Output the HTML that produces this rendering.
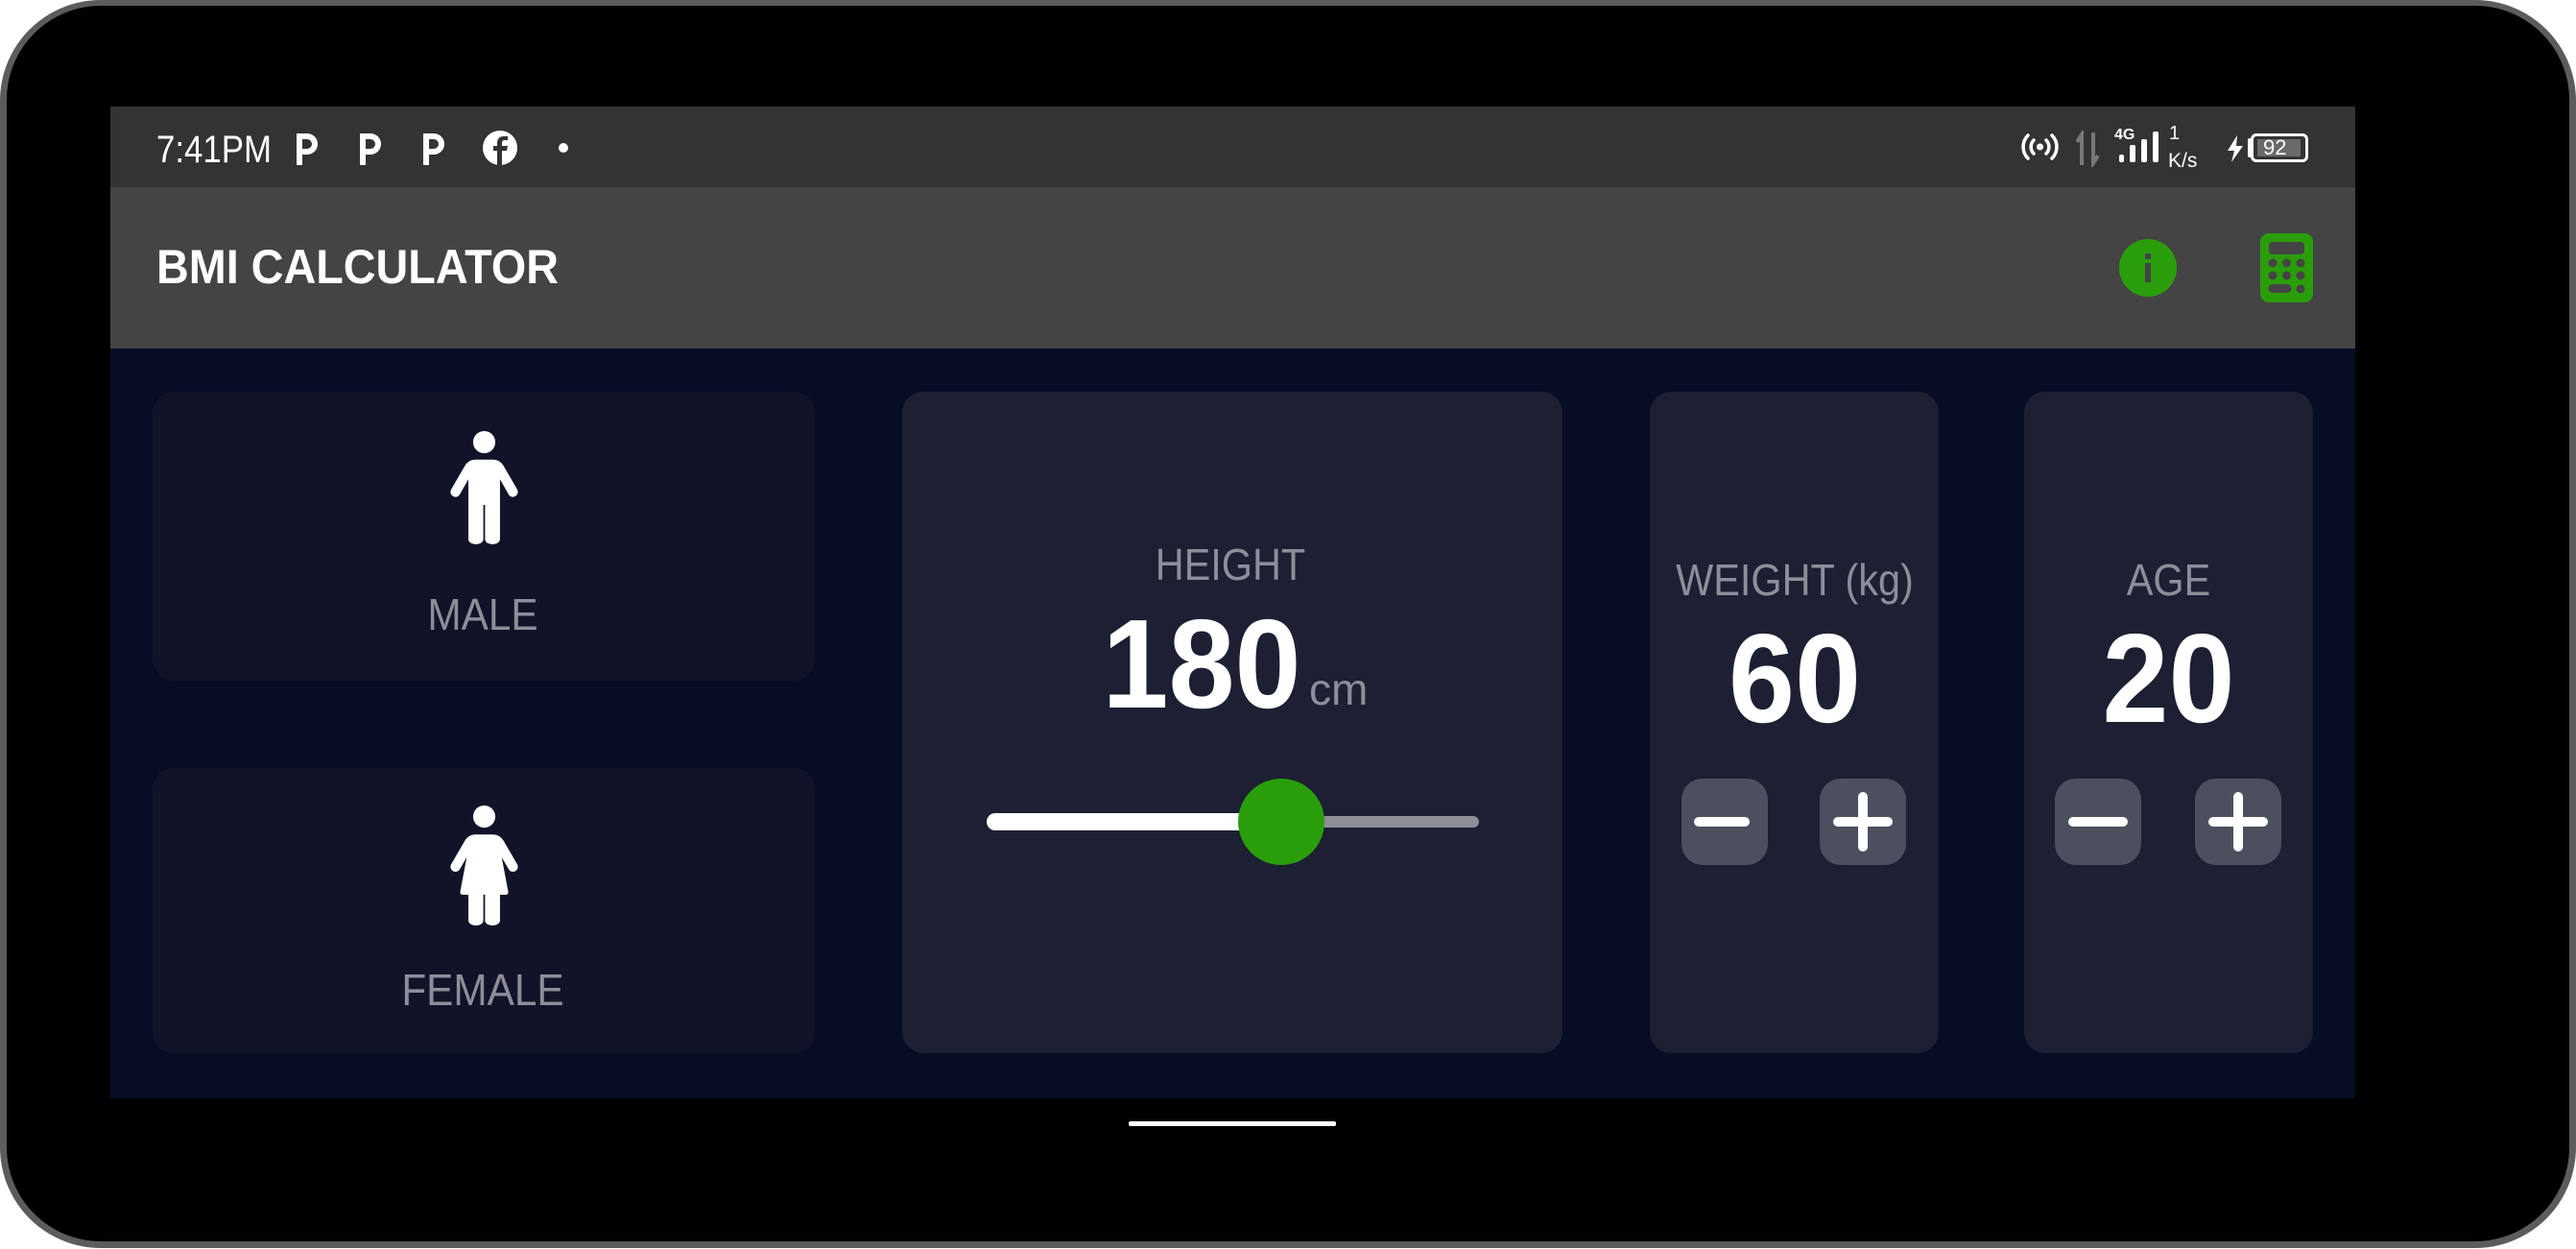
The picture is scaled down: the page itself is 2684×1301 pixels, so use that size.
<!DOCTYPE html>
<html><head><meta charset="utf-8"><style>
*{margin:0;padding:0;box-sizing:border-box}
html,body{width:2684px;height:1301px;background:#fff;overflow:hidden;font-family:"Liberation Sans",sans-serif}
.dev{position:absolute;left:0;top:0;width:2684px;height:1300px;border-radius:105px;background:#5c5c5c;}
.dev2{position:absolute;left:7px;top:6px;width:2670px;height:1287px;border-radius:98px;background:#000;}
.abs{position:absolute}
.scr{position:absolute;left:115px;top:111px;width:2339px;height:1033px;background:#080d26;overflow:hidden}
.sb{position:absolute;left:0;top:0;width:100%;height:84px;background:#333333}
.ab{position:absolute;left:0;top:84px;width:100%;height:168px;background:#444444}
.card{position:absolute;border-radius:22px}
.dk{background:#111428}
.lt{background:#1d1f33}
.lbl{position:absolute;color:#8d8e98;font-size:46px;white-space:nowrap;transform-origin:center;line-height:1}
.big{position:absolute;color:#fff;font-weight:bold;font-size:132px;line-height:1;white-space:nowrap;transform-origin:center}
.btn{position:absolute;width:90px;height:90px;border-radius:22px;background:#4c4f5e}
</style></head><body>
<div class="dev"></div><div class="dev2"></div>
<div class="scr">
 <div class="sb">
  <div class="abs" style="left:48px;top:25px;font-size:40px;color:#fff;line-height:1;transform:scaleX(.87);transform-origin:left">7:41PM</div>
  <svg class="abs" style="left:190px;top:24px" width="170" height="40" viewBox="0 0 170 40">
   <g fill="#fff" fill-rule="evenodd">
    <path d="M4 4h11a11 11 0 0 1 0 22h-5v11h-6z M10 10v10h5a5 5 0 0 0 0-10z"/>
    <path d="M70 4h11a11 11 0 0 1 0 22h-5v11h-6z M76 10v10h5a5 5 0 0 0 0-10z"/>
    <path d="M136 4h11a11 11 0 0 1 0 22h-5v11h-6z M142 10v10h5a5 5 0 0 0 0-10z"/>
   </g>
  </svg>
  <svg class="abs" style="left:387px;top:24px" width="40" height="38" viewBox="0 0 40 38">
   <circle cx="19" cy="19" r="18" fill="#fff"/>
   <path d="M21 37V22h5l1-5h-6v-3c0-2 1-3 3-3h3V7h-4c-5 0-7 3-7 7v3h-4v5h4v15z" fill="#333"/>
  </svg>
  <div class="abs" style="left:467px;top:38px;width:10px;height:10px;border-radius:5px;background:#fff"></div>
  <svg class="abs" style="left:1988px;top:24px" width="45" height="36" viewBox="0 0 45 36">
   <g fill="none" stroke="#fff" stroke-width="3.5" stroke-linecap="round">
    <path d="M10 6a17 17 0 0 0 0 24"/><path d="M35 6a17 17 0 0 1 0 24"/>
    <path d="M16 11a10 10 0 0 0 0 14"/><path d="M29 11a10 10 0 0 1 0 14"/>
   </g><circle cx="22.5" cy="18" r="3.5" fill="#fff"/>
  </svg>
  <svg class="abs" style="left:2048px;top:25px" width="30" height="38" viewBox="0 0 30 38">
   <path d="M6 36V4L1 12M18 2v32l5-8" fill="none" stroke="#777" stroke-width="4"/>
  </svg>
  <div class="abs" style="left:2088px;top:21px;font-size:16px;font-weight:bold;color:#fff">4G</div>
  <svg class="abs" style="left:2090px;top:24px" width="46" height="36" viewBox="0 0 46 36">
   <g fill="#fff"><rect x="3" y="26" width="5" height="8" rx="2"/><rect x="14" y="16" width="6" height="18" rx="2"/><rect x="26" y="10" width="6" height="24" rx="2"/><rect x="38" y="2" width="6" height="32" rx="2"/></g>
  </svg>
  <div class="abs" style="left:2145px;top:18px;font-size:20px;color:#fff;line-height:1">1</div>
  <div class="abs" style="left:2144px;top:46px;font-size:21px;color:#fff;line-height:1">K/s</div>
  <svg class="abs" style="left:2204px;top:30px" width="20" height="28" viewBox="0 0 20 28"><path d="M12 0L2 16h7l-3 12 12-17h-7z" fill="#fff"/></svg>
  <div class="abs" style="left:2227px;top:33px;width:5px;height:20px;background:#fff;border-radius:2px"></div>
  <div class="abs" style="left:2230px;top:28px;width:60px;height:30px;border:3px solid #fff;border-radius:6px;background:#333">
   <div class="abs" style="left:4px;top:3px;width:45px;height:18px;background:#6a6a6a"></div>
   <div class="abs" style="left:10px;top:1px;font-size:22px;color:#fff;line-height:1">92</div>
  </div>
 </div>
 <div class="ab">
  <div class="abs" style="left:48px;top:58px;font-size:50px;font-weight:bold;color:#fff;line-height:1;transform:scaleX(.935);transform-origin:left;white-space:nowrap">BMI CALCULATOR</div>
  <svg class="abs" style="left:2093px;top:54px" width="60" height="60" viewBox="0 0 60 60">
   <circle cx="30" cy="30" r="30" fill="#2a9d0a"/>
   <rect x="27" y="15" width="6" height="6" fill="#444"/><rect x="27" y="25" width="6" height="20" fill="#444"/>
  </svg>
  <svg class="abs" style="left:2240px;top:48px" width="55" height="72" viewBox="0 0 55 72">
   <rect x="0" y="0" width="55" height="72" rx="9" fill="#2a9d0a"/>
   <rect x="9" y="9" width="37" height="13" rx="4" fill="#444"/>
   <g fill="#444"><circle cx="13" cy="31" r="4.5"/><circle cx="27.5" cy="31" r="4.5"/><circle cx="42" cy="31" r="4.5"/>
   <circle cx="13" cy="44" r="4.5"/><circle cx="27.5" cy="44" r="4.5"/><circle cx="42" cy="44" r="4.5"/>
   <rect x="8.5" y="53" width="24" height="9" rx="4.5"/><circle cx="42" cy="58" r="4.5"/></g>
  </svg>
 </div>
 <div class="card dk" style="left:44px;top:297px;width:690px;height:301px"></div>
 <div class="card dk" style="left:44px;top:689px;width:690px;height:297px"></div>
 <div class="card lt" style="left:825px;top:297px;width:688px;height:689px"></div>
 <div class="card lt" style="left:1604px;top:297px;width:301px;height:689px"></div>
 <div class="card lt" style="left:1994px;top:297px;width:301px;height:689px"></div>
 <svg class="abs" style="left:347px;top:334px" width="85" height="129" viewBox="700 100 190 290">
  <g fill="#fff"><circle cx="795" cy="135" r="26"/>
  <path d="M775 176h40c12 0 20 6 25 14l32 55c8 14-12 26-20 12l-20-35v140c0 16-35 16-35 0v-80h-4v80c0 16-35 16-35 0V222l-20 35c-8 14-28 2-20-12l32-55c5-8 13-14 25-14z"/></g>
 </svg>
 <div class="lbl" style="left:288px;top:506px;width:200px;text-align:center;transform:scaleX(.92)">MALE</div>
 <svg class="abs" style="left:347px;top:724px" width="85" height="129" viewBox="700 975 190 290">
  <g fill="#fff"><circle cx="795" cy="1010" r="26"/>
  <path d="M775 1052h40c12 0 20 6 25 14l32 55c8 14-12 26-20 12l-16-28 15 80c1 6-2 8-6 8h-13v60c0 16-35 16-35 0v-60h-4v60c0 16-35 16-35 0v-60h-13c-4 0-7-2-6-8l15-80-16 28c-8 14-28 2-20-12l32-55c5-8 13-14 25-14z"/></g>
 </svg>
 <div class="lbl" style="left:238px;top:897px;width:300px;text-align:center;transform:scaleX(.92)">FEMALE</div>
 <div class="lbl" style="left:1017px;top:454px;width:300px;text-align:center;transform:scaleX(.9)">HEIGHT</div>
 <div class="big" style="left:1022px;top:515px;width:230px;text-align:center;transform:scaleX(.94)">180</div>
 <div class="abs" style="left:1249px;top:584px;font-size:46px;color:#8d8e98;line-height:1">cm</div>
 <div class="abs" style="left:914px;top:739px;width:512px;height:12px;border-radius:6px;background:#8d8e98"></div>
 <div class="abs" style="left:913px;top:736px;width:320px;height:18px;border-radius:9px;background:#fff"></div>
 <div class="abs" style="left:1175px;top:700px;width:90px;height:90px;border-radius:45px;background:#2a9d0a"></div>
 <div class="lbl" style="left:1605px;top:470px;width:300px;text-align:center;transform:scaleX(.9)">WEIGHT (kg)</div>
 <div class="big" style="left:1605px;top:530px;width:300px;text-align:center;transform:scaleX(.94)">60</div>
 <div class="btn" style="left:1637px;top:700px"></div>
 <div class="btn" style="left:1781px;top:700px"></div>
 <div class="lbl" style="left:1994px;top:470px;width:301px;text-align:center;transform:scaleX(.9)">AGE</div>
 <div class="big" style="left:1994px;top:530px;width:301px;text-align:center;transform:scaleX(.94)">20</div>
 <div class="btn" style="left:2026px;top:700px"></div>
 <div class="btn" style="left:2172px;top:700px"></div>
 <svg class="abs" style="left:0;top:0" width="2339" height="1033">
  <g stroke="#fff" stroke-width="10" stroke-linecap="round">
   <path d="M1655 745h48"/><path d="M1800 745h52M1826 719v52"/>
   <path d="M2045 745h52"/><path d="M2191 745h52M2217 719v52"/>
  </g>
 </svg>
</div>
<div class="abs" style="left:1176px;top:1168px;width:216px;height:5px;background:#fff;border-radius:2px"></div>
</body></html>
